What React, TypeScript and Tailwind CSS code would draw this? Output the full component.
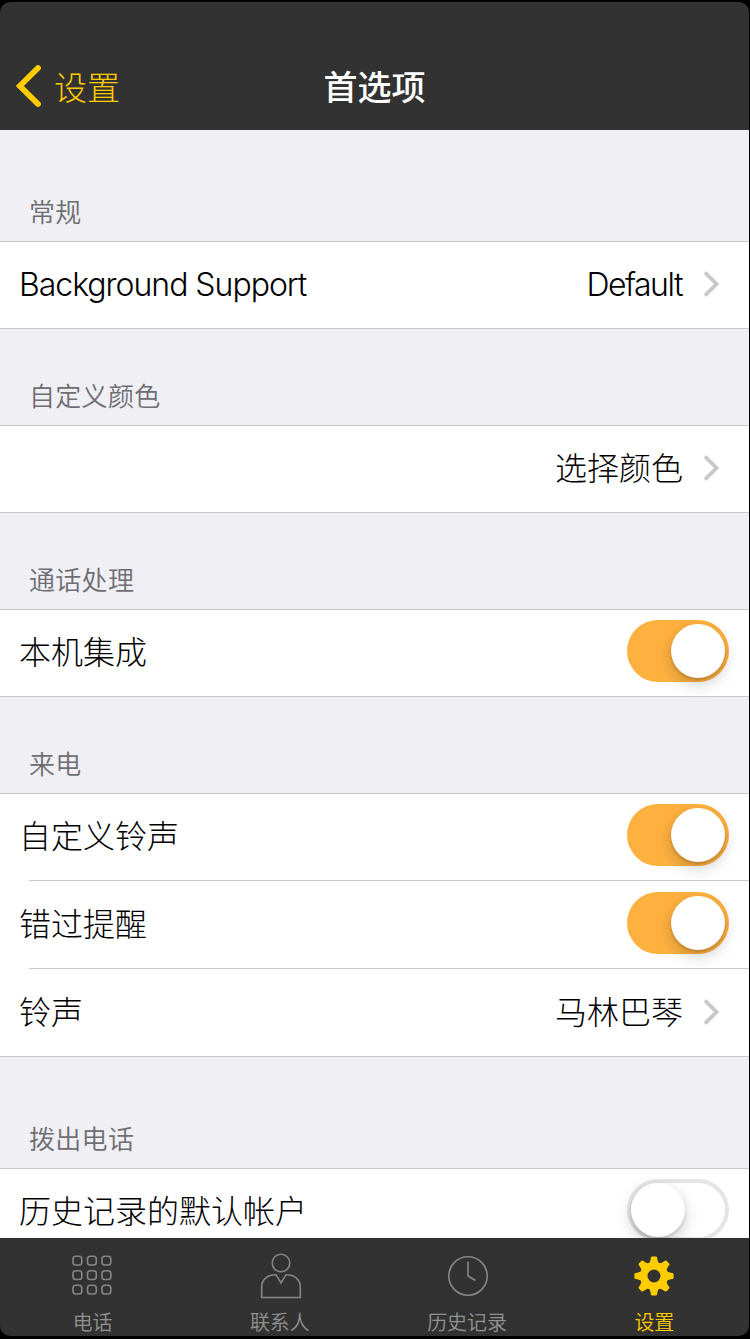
import { ReactNode } from 'react';
import clsx from 'clsx';

interface SectionProps {
  title: string;
  tall?: boolean;
  children: ReactNode;
}

function Section({ title, tall, children }: SectionProps) {
  return (
    <section>
      <h2
        className={clsx(
          'flex items-end pl-[29px] pb-2 text-[26px] leading-10 font-[350] tracking-[0.3px] text-[#6d6d72]',
          tall ? 'h-[111px]' : 'h-24'
        )}
      >
        {title}
      </h2>
      <div className="border-y border-[#c8c7cc] bg-white">{children}</div>
    </section>
  );
}

interface RowProps {
  label?: string;
  latin?: boolean;
  divided?: boolean;
  children: ReactNode;
}

function Row({ label, latin, divided, children }: RowProps) {
  return (
    <div>
      {divided && <div className="ml-[29px] h-px bg-[#c8c7cc]" />}
      <div
        className={clsx(
          'flex items-center justify-between pr-5 pl-[19px] text-[32px] leading-[46px] font-light text-black',
          divided ? 'h-[87px]' : 'h-[86px]'
        )}
      >
        <span className={clsx('whitespace-nowrap', latin && 'tracking-[-1.02px]')}>{label}</span>
        {children}
      </div>
    </div>
  );
}

function Value({ text, latin }: { text: string; latin?: boolean }) {
  return (
    <div className="flex items-center gap-5 pr-[9px]">
      <span className={clsx(latin && 'mr-px tracking-[-1.5px]')}>{text}</span>
      <svg className="mb-0.5" width="17" height="26" viewBox="0 0 17 26" fill="none" stroke="#c7c7cc" strokeWidth="3.8">
        <path d="M2 1.5 L13.5 13 L2 24.5" />
      </svg>
    </div>
  );
}

function Toggle({ on }: { on: boolean }) {
  return (
    <div
      className={clsx(
        'mb-1 flex h-[62px] w-[102px] shrink-0 items-center rounded-full p-1',
        on ? 'justify-end bg-[#ffb140]' : 'bg-white shadow-[inset_0_0_0_4px_#e5e5e5]'
      )}
    >
      <div className="size-[54px] rounded-full bg-white shadow-[0_6px_16px_rgba(0,0,0,0.2),0_2px_3px_rgba(0,0,0,0.14)]" />
    </div>
  );
}

function KeypadIcon() {
  const offsets = [1, 15.5, 30];
  return (
    <svg className="-ml-[3px]" width="40" height="42" viewBox="0 0 40 42" fill="none" stroke="#868686" strokeWidth="1.6">
      {offsets.map((y) =>
        offsets.map((x) => <rect key={`${x}-${y}`} x={x} y={y + 0.2} width="8.8" height="8.8" rx="2.8" />)
      )}
    </svg>
  );
}

function ContactIcon() {
  return (
    <svg width="42" height="46" viewBox="0 0 42 46" fill="none" stroke="#868686" strokeWidth="1.6">
      <circle cx="21" cy="10" r="8.8" />
      <path d="M1.7 44.5 V34 C1.7 26 8 21.5 16 21.7 L21 30 L26 21.7 C34 21.5 40.3 26 40.3 34 V44.5 Z" />
    </svg>
  );
}

function ClockIcon() {
  return (
    <svg width="42" height="42" viewBox="0 0 42 42" fill="none" stroke="#868686" strokeWidth="1.6">
      <circle cx="21" cy="21" r="19.2" />
      <path d="M21 6.5 V21 L28.5 25.5" />
    </svg>
  );
}

function GearIcon() {
  const angles = [0, 45, 90, 135, 180, 225, 270, 315];
  return (
    <svg className="-ml-0.5" width="40" height="40" viewBox="-20 -20 40 40">
      {angles.map((a) => (
        <path
          key={a}
          d="M-5.6 -12 C-3.8 -14 -3.4 -16 -3.1 -18.5 Q-2.9 -19.6 -1.8 -19.6 H1.8 Q2.9 -19.6 3.1 -18.5 C3.4 -16 3.8 -14 5.6 -12 Z"
          fill="#ffcc00"
          transform={`rotate(${a})`}
        />
      ))}
      <circle r="10.2" fill="none" stroke="#ffcc00" strokeWidth="7.4" />
    </svg>
  );
}

interface TabProps {
  label: string;
  active?: boolean;
  children: ReactNode;
}

function Tab({ label, active, children }: TabProps) {
  return (
    <div
      className={clsx(
        'flex flex-col items-center text-xl font-[350]',
        active ? 'text-[#ffcc00]' : 'text-[#929292]'
      )}
    >
      <div className="flex h-[46px] items-center">{children}</div>
      <span className="mt-[9px] mr-0.5 leading-[30px]">{label}</span>
    </div>
  );
}

export default function App() {
  return (
    <div className="h-[1339px] w-[750px] overflow-hidden bg-black pt-0.5 pr-px pb-[3px] font-['Inter','Noto_Sans_CJK_SC',sans-serif]">
      <div className="flex h-full flex-col overflow-hidden rounded-[10px] bg-[#323232]">
        <header className="grid h-32 shrink-0 grid-cols-3 items-end pb-[17px] text-[34px] leading-[50px]">
          <div className="flex items-center gap-3 pl-4 font-light text-[#ffcc00]">
            <svg className="mb-1" width="26" height="44" viewBox="0 0 26 44" fill="none" stroke="#ffcc00" strokeWidth="5.8" strokeLinecap="round">
              <path d="M22 4 L3.8 22 L22 40" />
            </svg>
            <span className="text-[33px]">设置</span>
          </div>
          <h1 className="text-center font-medium text-white">首选项</h1>
        </header>

        <main className="h-[1108px] shrink-0 overflow-hidden bg-[#efeff4]">
          <Section title="常规" tall>
            <Row label="Background Support" latin>
              <Value text="Default" latin />
            </Row>
          </Section>
          <Section title="自定义颜色">
            <Row>
              <Value text="选择颜色" />
            </Row>
          </Section>
          <Section title="通话处理">
            <Row label="本机集成">
              <Toggle on />
            </Row>
          </Section>
          <Section title="来电">
            <Row label="自定义铃声">
              <Toggle on />
            </Row>
            <Row label="错过提醒" divided>
              <Toggle on />
            </Row>
            <Row label="铃声" divided>
              <Value text="马林巴琴" />
            </Row>
          </Section>
          <Section title="拨出电话" tall>
            <Row label="历史记录的默认帐户">
              <Toggle on={false} />
            </Row>
          </Section>
        </main>

        <nav className="grid grow grid-cols-4 pt-[15px]">
          <Tab label="电话">
            <KeypadIcon />
          </Tab>
          <Tab label="联系人">
            <ContactIcon />
          </Tab>
          <Tab label="历史记录">
            <ClockIcon />
          </Tab>
          <Tab label="设置" active>
            <GearIcon />
          </Tab>
        </nav>
      </div>
    </div>
  );
}
